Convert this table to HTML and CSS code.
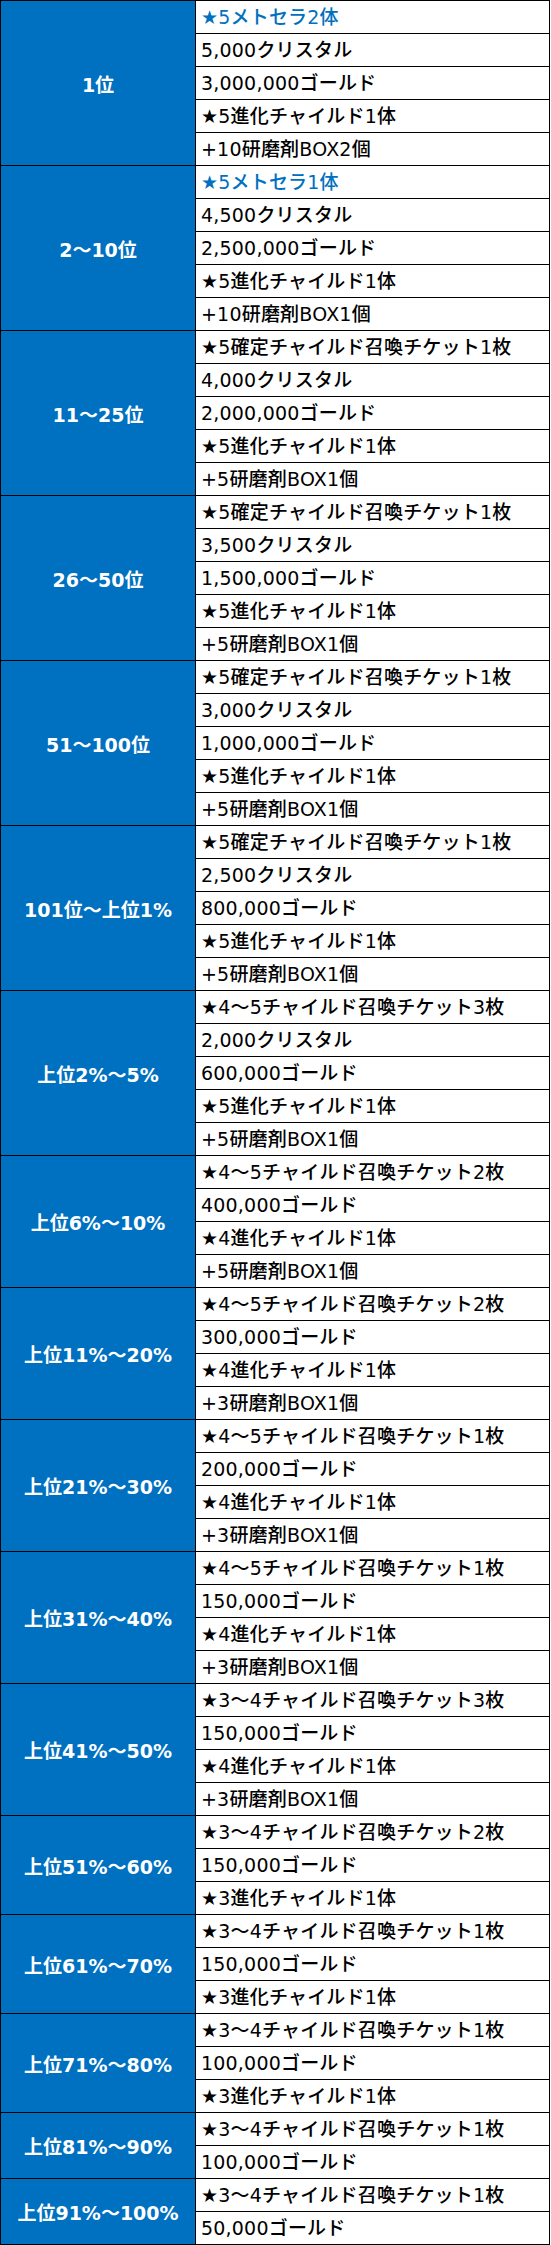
FILE: index.html
```html
<!DOCTYPE html>
<html lang="ja">
<head>
<meta charset="utf-8">
<title>ランキング報酬</title>
<link rel="stylesheet" href="styles.css">
</head>
<body>
<div class="table">
  <div class="group">
    <div class="rank">1位</div>
    <div class="items">
      <div class="item blue">★5メトセラ2体</div>
      <div class="item">5,000クリスタル</div>
      <div class="item">3,000,000ゴールド</div>
      <div class="item">★5進化チャイルド1体</div>
      <div class="item">+10研磨剤BOX2個</div>
    </div>
  </div>
  <div class="group">
    <div class="rank">2〜10位</div>
    <div class="items">
      <div class="item blue">★5メトセラ1体</div>
      <div class="item">4,500クリスタル</div>
      <div class="item">2,500,000ゴールド</div>
      <div class="item">★5進化チャイルド1体</div>
      <div class="item">+10研磨剤BOX1個</div>
    </div>
  </div>
  <div class="group">
    <div class="rank">11〜25位</div>
    <div class="items">
      <div class="item">★5確定チャイルド召喚チケット1枚</div>
      <div class="item">4,000クリスタル</div>
      <div class="item">2,000,000ゴールド</div>
      <div class="item">★5進化チャイルド1体</div>
      <div class="item">+5研磨剤BOX1個</div>
    </div>
  </div>
  <div class="group">
    <div class="rank">26〜50位</div>
    <div class="items">
      <div class="item">★5確定チャイルド召喚チケット1枚</div>
      <div class="item">3,500クリスタル</div>
      <div class="item">1,500,000ゴールド</div>
      <div class="item">★5進化チャイルド1体</div>
      <div class="item">+5研磨剤BOX1個</div>
    </div>
  </div>
  <div class="group">
    <div class="rank">51〜100位</div>
    <div class="items">
      <div class="item">★5確定チャイルド召喚チケット1枚</div>
      <div class="item">3,000クリスタル</div>
      <div class="item">1,000,000ゴールド</div>
      <div class="item">★5進化チャイルド1体</div>
      <div class="item">+5研磨剤BOX1個</div>
    </div>
  </div>
  <div class="group">
    <div class="rank">101位〜上位1%</div>
    <div class="items">
      <div class="item">★5確定チャイルド召喚チケット1枚</div>
      <div class="item">2,500クリスタル</div>
      <div class="item">800,000ゴールド</div>
      <div class="item">★5進化チャイルド1体</div>
      <div class="item">+5研磨剤BOX1個</div>
    </div>
  </div>
  <div class="group">
    <div class="rank">上位2%〜5%</div>
    <div class="items">
      <div class="item">★4〜5チャイルド召喚チケット3枚</div>
      <div class="item">2,000クリスタル</div>
      <div class="item">600,000ゴールド</div>
      <div class="item">★5進化チャイルド1体</div>
      <div class="item">+5研磨剤BOX1個</div>
    </div>
  </div>
  <div class="group">
    <div class="rank">上位6%〜10%</div>
    <div class="items">
      <div class="item">★4〜5チャイルド召喚チケット2枚</div>
      <div class="item">400,000ゴールド</div>
      <div class="item">★4進化チャイルド1体</div>
      <div class="item">+5研磨剤BOX1個</div>
    </div>
  </div>
  <div class="group">
    <div class="rank">上位11%〜20%</div>
    <div class="items">
      <div class="item">★4〜5チャイルド召喚チケット2枚</div>
      <div class="item">300,000ゴールド</div>
      <div class="item">★4進化チャイルド1体</div>
      <div class="item">+3研磨剤BOX1個</div>
    </div>
  </div>
  <div class="group">
    <div class="rank">上位21%〜30%</div>
    <div class="items">
      <div class="item">★4〜5チャイルド召喚チケット1枚</div>
      <div class="item">200,000ゴールド</div>
      <div class="item">★4進化チャイルド1体</div>
      <div class="item">+3研磨剤BOX1個</div>
    </div>
  </div>
  <div class="group">
    <div class="rank">上位31%〜40%</div>
    <div class="items">
      <div class="item">★4〜5チャイルド召喚チケット1枚</div>
      <div class="item">150,000ゴールド</div>
      <div class="item">★4進化チャイルド1体</div>
      <div class="item">+3研磨剤BOX1個</div>
    </div>
  </div>
  <div class="group">
    <div class="rank">上位41%〜50%</div>
    <div class="items">
      <div class="item">★3〜4チャイルド召喚チケット3枚</div>
      <div class="item">150,000ゴールド</div>
      <div class="item">★4進化チャイルド1体</div>
      <div class="item">+3研磨剤BOX1個</div>
    </div>
  </div>
  <div class="group">
    <div class="rank">上位51%〜60%</div>
    <div class="items">
      <div class="item">★3〜4チャイルド召喚チケット2枚</div>
      <div class="item">150,000ゴールド</div>
      <div class="item">★3進化チャイルド1体</div>
    </div>
  </div>
  <div class="group">
    <div class="rank">上位61%〜70%</div>
    <div class="items">
      <div class="item">★3〜4チャイルド召喚チケット1枚</div>
      <div class="item">150,000ゴールド</div>
      <div class="item">★3進化チャイルド1体</div>
    </div>
  </div>
  <div class="group">
    <div class="rank">上位71%〜80%</div>
    <div class="items">
      <div class="item">★3〜4チャイルド召喚チケット1枚</div>
      <div class="item">100,000ゴールド</div>
      <div class="item">★3進化チャイルド1体</div>
    </div>
  </div>
  <div class="group">
    <div class="rank">上位81%〜90%</div>
    <div class="items">
      <div class="item">★3〜4チャイルド召喚チケット1枚</div>
      <div class="item">100,000ゴールド</div>
    </div>
  </div>
  <div class="group">
    <div class="rank">上位91%〜100%</div>
    <div class="items">
      <div class="item">★3〜4チャイルド召喚チケット1枚</div>
      <div class="item">50,000ゴールド</div>
    </div>
  </div>
</div>
</body>
</html>
```
FILE: styles.css
```css
html, body {
  margin: 0;
  padding: 0;
  background: #fff;
}

.table {
  width: 550px;
  box-sizing: border-box;
  border-top: 1px solid #000;
  border-left: 1px solid #000;
  border-right: 1px solid #000;
  font-family: "DejaVu Sans", "Noto Sans CJK JP", sans-serif;
  font-size: 19px;
  color: #000;
}

.group {
  display: flex;
  border-bottom: 1px solid #000;
}

.rank {
  width: 194px;
  flex: none;
  border-right: 1px solid #000;
  background: #0070c0;
  color: #fff;
  font-weight: bold;
  display: flex;
  align-items: center;
  justify-content: center;
}

.items {
  flex: 1;
  display: flex;
  flex-direction: column;
}

.item {
  height: 32px;
  line-height: 32px;
  padding-left: 5px;
  border-bottom: 1px solid #000;
  white-space: nowrap;
  overflow: hidden;
  font-weight: 500;
  letter-spacing: 0.2px;
}

.item:last-child {
  border-bottom: none;
}

.item.blue {
  color: #0070c0;
}
```
